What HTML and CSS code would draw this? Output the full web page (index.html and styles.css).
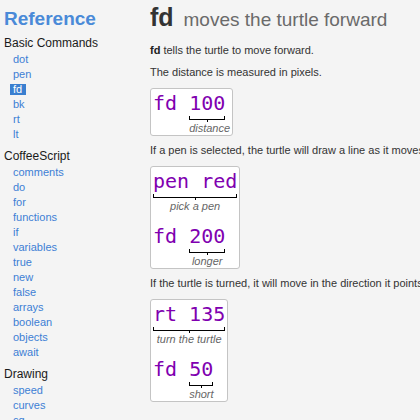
FILE: index.html
```html
<!DOCTYPE html>
<html lang="en">
<head>
<meta charset="utf-8">
<title>fd - Reference</title>
<link rel="stylesheet" href="styles.css">
</head>
<body>
<div class="page">
  <nav class="sidebar">
    <h2 class="brand">Reference</h2>
    <section class="group">
      <h3 class="group-title">Basic Commands</h3>
      <ul class="links">
        <li><a href="#">dot</a></li>
        <li><a href="#">pen</a></li>
        <li><a href="#" class="current">fd</a></li>
        <li><a href="#">bk</a></li>
        <li><a href="#">rt</a></li>
        <li><a href="#">lt</a></li>
      </ul>
    </section>
    <section class="group">
      <h3 class="group-title">CoffeeScript</h3>
      <ul class="links">
        <li><a href="#">comments</a></li>
        <li><a href="#">do</a></li>
        <li><a href="#">for</a></li>
        <li><a href="#">functions</a></li>
        <li><a href="#">if</a></li>
        <li><a href="#">variables</a></li>
        <li><a href="#">true</a></li>
        <li><a href="#">new</a></li>
        <li><a href="#">false</a></li>
        <li><a href="#">arrays</a></li>
        <li><a href="#">boolean</a></li>
        <li><a href="#">objects</a></li>
        <li><a href="#">await</a></li>
      </ul>
    </section>
    <section class="group">
      <h3 class="group-title">Drawing</h3>
      <ul class="links">
        <li><a href="#">speed</a></li>
        <li><a href="#">curves</a></li>
        <li><a href="#">cg</a></li>
      </ul>
    </section>
  </nav>

  <main class="content">
    <h1 class="title">fd <span class="subtitle">moves the turtle forward</span></h1>
    <p class="note"><b>fd</b> tells the turtle to move forward.</p>
    <p class="note">The distance is measured in pixels.</p>
    <div class="snippet">
      <div class="line">
        <span class="tok">fd </span>
        <span class="seg">
          <span class="mark"><span class="tok">100</span><span class="bracket"></span></span>
          <span class="label">distance</span>
        </span>
      </div>
    </div>

    <p class="note">If a pen is selected, the turtle will draw a line as it moves.</p>
    <div class="snippet">
      <div class="line">
        <span class="seg">
          <span class="mark"><span class="tok">pen red</span><span class="bracket"></span></span>
          <span class="label">pick a pen</span>
        </span>
      </div>
      <div class="line">
        <span class="tok">fd </span>
        <span class="seg">
          <span class="mark"><span class="tok">200</span><span class="bracket"></span></span>
          <span class="label">longer</span>
        </span>
      </div>
    </div>

    <p class="note">If the turtle is turned, it will move in the direction it points.</p>
    <div class="snippet">
      <div class="line">
        <span class="seg">
          <span class="mark"><span class="tok">rt 135</span><span class="bracket"></span></span>
          <span class="label">turn the turtle</span>
        </span>
      </div>
      <div class="line">
        <span class="tok">fd </span>
        <span class="seg">
          <span class="mark"><span class="tok">50</span><span class="bracket"></span></span>
          <span class="label">short</span>
        </span>
      </div>
    </div>
  </main>
</div>
</body>
</html>
```

FILE: styles.css
```css
html, body {
  margin: 0;
  padding: 0;
  background: #f4f4f4;
  overflow: hidden;
}

body {
  font-family: "Liberation Sans", Arial, sans-serif;
  font-size: 11px;
  color: #333;
}

.page {
  display: flex;
  align-items: flex-start;
  width: 420px;
  height: 420px;
  overflow: hidden;
}

/* ---------- sidebar ---------- */
.sidebar {
  flex: 0 0 150px;
  box-sizing: border-box;
  padding: 8px 0 0 4px;
}

.brand {
  margin: 0 0 6px;
  font-size: 19px;
  line-height: 22px;
  font-weight: bold;
  color: #4a8ad8;
}

.group + .group {
  margin-top: 7px;
}

.group-title {
  margin: 0 0 1px;
  font-size: 12px;
  line-height: 15px;
  font-weight: normal;
  color: #1a1a1a;
}

.links {
  list-style: none;
  margin: 0;
  padding: 0 0 0 9px;
}

.links li {
  font-size: 11px;
  line-height: 15px;
}

.links a {
  color: #3d7fd4;
  text-decoration: none;
}

.links a.current {
  display: inline-block;
  line-height: 11px;
  margin-left: -3px;
  padding: 0 4px 0 3px;
  background: #3a7fd0;
  color: #fff;
}

/* ---------- content ---------- */
.content {
  flex: 1 1 auto;
  min-width: 0;
  display: flex;
  flex-direction: column;
  align-items: flex-start;
  white-space: nowrap;
}

.title {
  margin: 0 0 9px;
  padding-top: 2px;
  font-size: 25px;
  line-height: 30px;
  font-weight: bold;
  color: #333;
}

.subtitle {
  margin-left: 3px;
  font-size: 19px;
  font-weight: normal;
  color: #6a6a6a;
}

.note {
  margin: 0 0 9px;
  line-height: 13px;
  color: #333;
}

.note b {
  color: #222;
}

.snippet {
  margin: 0 0 8px;
  padding: 3px 2px 0 2px;
  background: #fff;
  border: 1px solid #c4c4c4;
  border-radius: 3px;
  display: flex;
  flex-direction: column;
  gap: 12px;
}

.line {
  display: flex;
  align-items: flex-start;
}

.tok {
  font-family: "DejaVu Sans Mono", "Liberation Mono", monospace;
  font-size: 20px;
  line-height: 22px;
  color: #8000b0;
  white-space: pre;
}

.seg {
  display: flex;
  flex-direction: column;
  align-items: flex-start;
}

.mark {
  display: flex;
  flex-direction: column;
}

.bracket {
  position: relative;
  margin-top: 2px;
  height: 3px;
  border: 1px solid #000;
  border-top: none;
}

.bracket::after {
  content: "";
  position: absolute;
  left: 50%;
  top: 3px;
  width: 1px;
  height: 3px;
  margin-left: -0.5px;
  background: #000;
}

.label {
  align-self: center;
  margin-top: 2px;
  font-size: 11px;
  line-height: 13px;
  font-style: italic;
  color: #666;
  white-space: nowrap;
}
```
